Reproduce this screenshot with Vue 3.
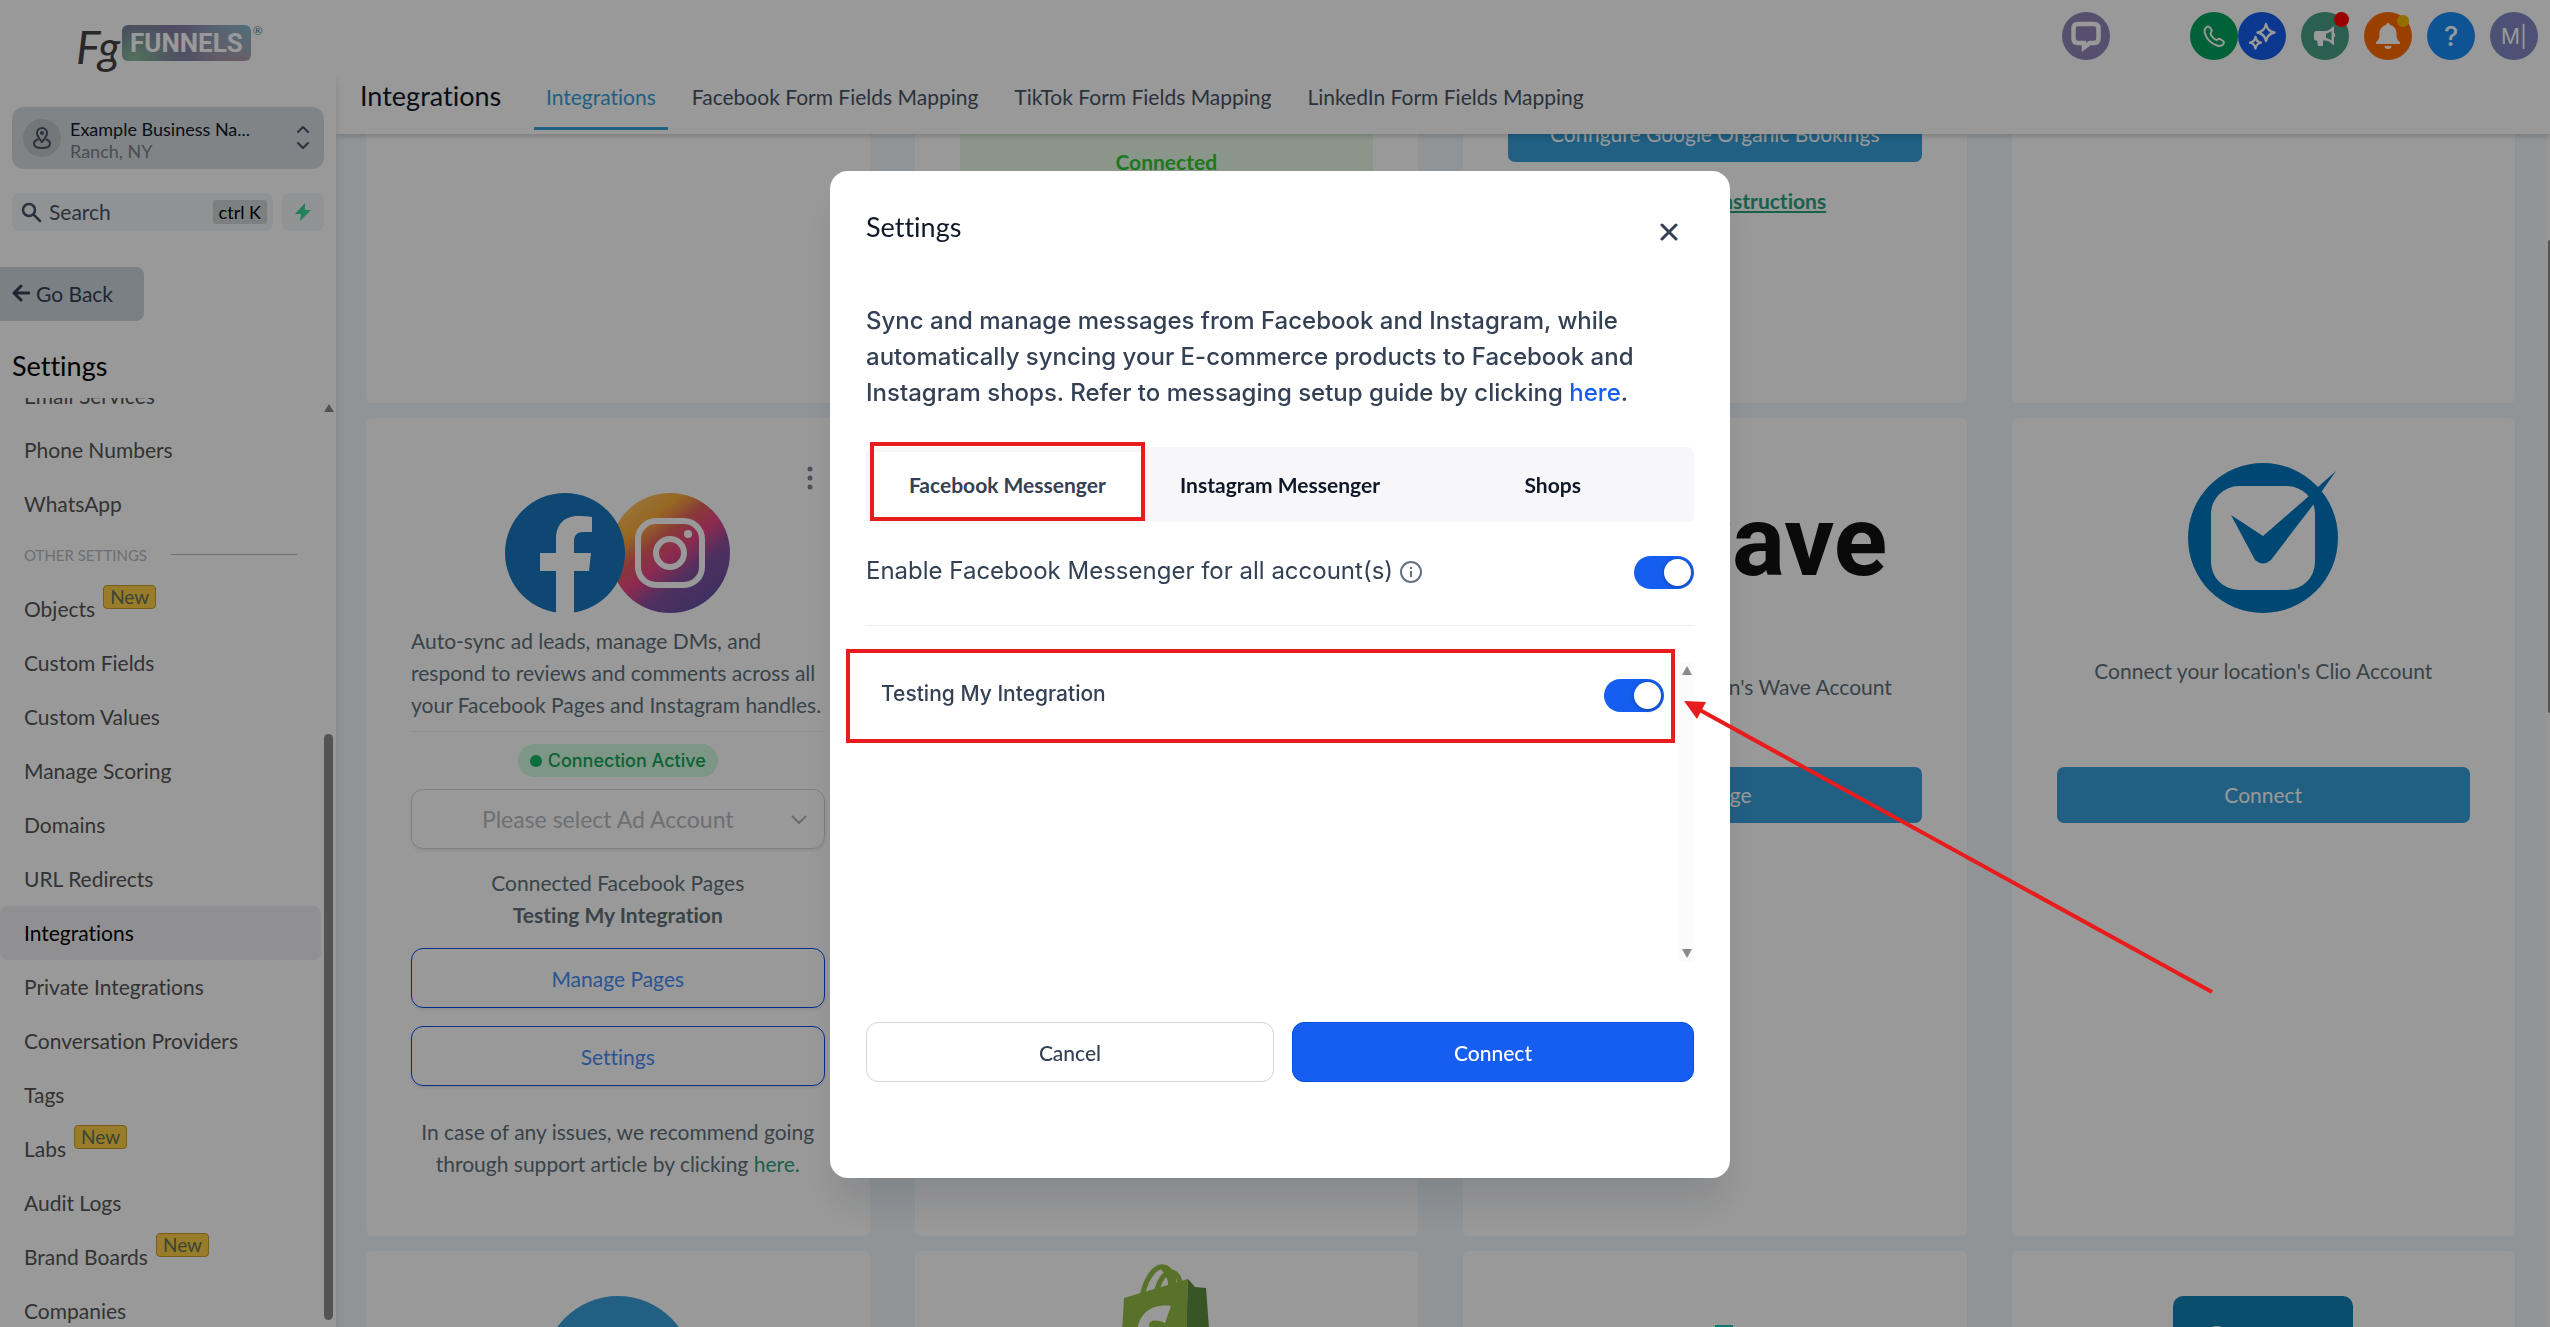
<script setup>
import { ref } from 'vue';

const navTop = ['Email Services', 'Phone Numbers', 'WhatsApp'].map((label) => ({ label }));

const navOther = [
  { label: 'Objects', isNew: true },
  { label: 'Custom Fields' },
  { label: 'Custom Values' },
  { label: 'Manage Scoring' },
  { label: 'Domains' },
  { label: 'URL Redirects' },
  { label: 'Integrations', active: true },
  { label: 'Private Integrations' },
  { label: 'Conversation Providers' },
  { label: 'Tags' },
  { label: 'Labs', isNew: true },
  { label: 'Audit Logs' },
  { label: 'Brand Boards', isNew: true },
  { label: 'Companies' },
];

const pageTabs = [
  'Integrations',
  'Facebook Form Fields Mapping',
  'TikTok Form Fields Mapping',
  'LinkedIn Form Fields Mapping',
];
const pageTab = ref('Integrations');

const modalTabs = ['Facebook Messenger', 'Instagram Messenger', 'Shops'];
const modalTab = ref('Facebook Messenger');

const adAccount = ref('');
const enableAll = ref(true);
const pages = ref([{ id: 'page-1', name: 'Testing My Integration', enabled: true }]);
</script>

<template>
  <div class="page">
    <aside class="sidebar">
      <div class="logo">
        <span class="logo-fg">Fg</span>
        <span class="logo-box">FUNNELS</span>
        <span class="logo-reg">®</span>
      </div>

      <button class="switcher" type="button">
        <span class="pin">
          <svg width="24" height="24" viewBox="0 0 24 24" fill="none" stroke="#475467" stroke-width="2" stroke-linecap="round" stroke-linejoin="round">
            <path d="M12 16c3-3.500 5-6 5-9a5 5 0 0 0-10 0c0 3 2 5.500 5 9z" />
            <circle cx="12" cy="7" r="1" />
            <path d="M7.500 13.500C5.500 14.300 4 15.700 4 17.500 4 20.500 7.500 22 12 22s8-1.500 8-4.500c0-1.800-1.500-3.200-3.500-4" />
          </svg>
        </span>
        <span class="place">
          <span class="place-name">Example Business Na...</span>
          <span class="place-city">Ranch, NY</span>
        </span>
        <svg width="14" height="26" viewBox="0 0 14 26" fill="none" stroke="#475467" stroke-width="2" stroke-linecap="round" stroke-linejoin="round">
          <path d="M2 7l5-5 5 5M2 18l5 5 5-5" />
        </svg>
      </button>

      <div class="search-row">
        <button class="search" type="button">
          <svg width="22" height="22" viewBox="0 0 22 22" fill="none" stroke="#475467" stroke-width="2.500" stroke-linecap="round">
            <circle cx="9" cy="9" r="6" />
            <path d="M13.500 13.500L20 20" />
          </svg>
          <span class="search-text">Search</span>
          <kbd>ctrl K</kbd>
        </button>
        <button class="bolt" type="button" aria-label="Quick actions">
          <svg width="18" height="20" viewBox="0 0 18 20" fill="#38d996"><path d="M11 1L1 12h6l-1 7L17 8h-6z" /></svg>
        </button>
      </div>

      <button class="go-back" type="button">
        <svg width="18" height="18" viewBox="0 0 18 18" fill="none" stroke="#344054" stroke-width="3" stroke-linecap="round" stroke-linejoin="round">
          <path d="M9 2L2 9l7 7M2 9h15" />
        </svg>
        Go Back
      </button>

      <h2 class="side-title">Settings</h2>

      <div class="nav-area">
        <nav class="nav">
          <a v-for="item in navTop" :key="item.label" href="#" class="nav-item">{{ item.label }}</a>
          <div class="nav-group"><span>OTHER SETTINGS</span></div>
          <a v-for="item in navOther" :key="item.label" href="#" class="nav-item" :class="{ active: item.active }">
            {{ item.label }}
            <span v-if="item.isNew" class="new-badge">New</span>
          </a>
        </nav>
        <div class="nav-scroll">
          <svg width="10" height="8" viewBox="0 0 10 8" fill="#888"><path d="M5 0l5 8H0z" /></svg>
          <div class="nav-thumb"></div>
        </div>
      </div>
    </aside>

    <div class="main">
      <header class="header">
        <div class="actions">
          <button class="round chat" type="button" aria-label="Chat">
            <svg width="32" height="32" viewBox="0 0 32 32">
              <path d="M8 4h16q4.500 0 4.500 4.500v10q0 4.500-4.500 4.500h-4l-6 4.500V23H8q-4.500 0-4.500-4.500v-10Q3.500 4 8 4z" fill="none" stroke="#fff" stroke-width="4.500" />
            </svg>
          </button>
          <div class="pair">
            <button class="round phone" type="button" aria-label="Call">
              <svg width="24" height="24" viewBox="0 0 24 24" fill="none" stroke="#fff" stroke-width="2" stroke-linejoin="round">
                <path d="M4 3.500c1-1.500 3-1.500 4 0l1.500 2.500c.8 1.500-.8 2.500-1 3.500 0 1.800 4 6.200 6 6.500 1.200 0 2-1.800 3.500-1l3 2c1.300 1 1 2.500 0 3.500-1.500 1.500-3.500 2-6 1C9 19.500 4.500 14.500 2.800 9 2 6.500 2.800 5 4 3.500z" />
              </svg>
            </button>
            <button class="round spark" type="button" aria-label="Assistant">
              <svg width="28" height="28" viewBox="0 0 28 28" fill="none" stroke="#fff" stroke-width="2.300" stroke-linejoin="round">
                <path d="M18 2c1 5 3 7.500 8.500 8.500C21 11.500 19 14 18 19c-1-5-3-7.500-8.500-8.500C15 9.500 17 7 18 2zM7.500 15c.6 3.500 2 5 5.500 5.700-3.500.7-4.900 2.300-5.500 5.800-.6-3.500-2-5.100-5.500-5.800 3.500-.7 4.900-2.200 5.500-5.700z" />
              </svg>
            </button>
          </div>
          <button class="round horn" type="button" aria-label="Announcements">
            <svg width="24" height="24" viewBox="0 0 24 24" fill="#fff">
              <path fill-rule="evenodd" d="M3 7h9c3 0 6-2 8-4.500h1v6.500c1.500.5 1.500 4 0 4.500V21h-1c-2-2.500-5-4.500-8-4.500h-2V22H5l-1-5.500H3c-1 0-2-1-2-2V9c0-1 1-2 2-2zm10 2.500v4.500c2 .3 4 1.300 5.500 2.500V7c-1.500 1.200-3.500 2.200-5.500 2.500z" />
            </svg>
            <span class="dot red"></span>
          </button>
          <button class="round bell" type="button" aria-label="Notifications">
            <svg width="26" height="28" viewBox="0 0 26 28" fill="#fff">
              <path d="M13 1a2 2 0 0 1 2 2c4 1 6.500 4 6.500 8.500 0 5 1 7 3.500 8.500v2H1v-2c2.500-1.500 3.500-3.500 3.500-8.500C4.500 7 7 4 11 3a2 2 0 0 1 2-2zM9.500 24h7a3.500 3 0 0 1-7 0z" />
            </svg>
            <span class="dot yellow"></span>
          </button>
          <button class="round help" type="button">?</button>
          <button class="round user" type="button">M|</button>
        </div>
        <div class="title-row">
          <h1>Integrations</h1>
          <nav class="page-tabs">
            <a v-for="tab in pageTabs" :key="tab" href="#" :class="{ active: tab === pageTab }" @click.prevent="pageTab = tab">{{ tab }}</a>
          </nav>
        </div>
      </header>

      <div class="content">
        <div class="grid">
          <section class="card row-one"></section>
          <section class="card row-one">
            <div class="connected">Connected</div>
          </section>
          <section class="card row-one">
            <button class="primary" type="button">Configure Google Organic Bookings</button>
            <a href="#" class="instructions">View Setup Instructions</a>
          </section>
          <section class="card row-one"></section>

          <section class="card row-two social">
            <button class="kebab" type="button" aria-label="More">
              <svg width="6" height="24" viewBox="0 0 6 24" fill="#7c8698"><circle cx="3" cy="3" r="2.500" /><circle cx="3" cy="12" r="2.500" /><circle cx="3" cy="21" r="2.500" /></svg>
            </button>
            <svg class="social-logo" width="225" height="120" viewBox="0 0 225 120">
              <defs>
                <linearGradient id="ig" x1="0.150" y1="0.050" x2="0.850" y2="0.950">
                  <stop offset="0.050" stop-color="#fdbf5c" />
                  <stop offset="0.220" stop-color="#fbad3a" />
                  <stop offset="0.380" stop-color="#e36060" />
                  <stop offset="0.520" stop-color="#ec4686" />
                  <stop offset="0.700" stop-color="#85509e" />
                  <stop offset="1" stop-color="#6052a4" />
                </linearGradient>
              </defs>
              <circle cx="165" cy="60" r="60" fill="url(#ig)" />
              <rect x="133" y="28" width="64" height="64" rx="18" fill="none" stroke="#fff" stroke-width="6" />
              <circle cx="165" cy="60" r="14" fill="none" stroke="#fff" stroke-width="6" />
              <circle cx="183" cy="41" r="4" fill="#fff" />
              <circle cx="60" cy="60" r="60" fill="#1877bd" />
              <path d="M51 121V78H35V60h16V46c0-14 8-23 22-23 5 0 9 0 14 1v15h-8c-7 0-10 3-10 10v11h17l-2 18H69v43z" fill="#fff" />
            </svg>
            <p class="desc">Auto-sync ad leads, manage DMs, and respond to reviews and comments across all your Facebook Pages and Instagram handles.</p>
            <span class="status"><i></i>Connection Active</span>
            <div class="select-wrap">
              <select v-model="adAccount" aria-label="Ad account">
                <option value="">Please select Ad Account</option>
              </select>
              <svg width="16" height="10" viewBox="0 0 16 10" fill="none" stroke="#b0b4bb" stroke-width="2"><path d="M1 1l7 7 7-7" /></svg>
            </div>
            <p class="pages">Connected Facebook Pages<br /><b>Testing My Integration</b></p>
            <div class="outline-list">
              <button class="outline" type="button">Manage Pages</button>
              <button class="outline" type="button">Settings</button>
            </div>
            <p class="issues">In case of any issues, we recommend going through support article by clicking <a href="#">here.</a></p>
          </section>

          <section class="card row-two"></section>

          <section class="card row-two wave">
            <div class="wave-logo">wave</div>
            <p class="card-text">Connect your location's Wave Account</p>
            <button class="primary" type="button">Manage</button>
          </section>

          <section class="card row-two clio">
            <svg class="clio-logo" width="150" height="150" viewBox="0 0 150 150">
              <circle cx="75" cy="75" r="75" fill="#0078c0" />
              <rect x="23" y="23" width="104" height="104" rx="28" fill="#fff" />
              <path d="M43 52l32 21 46-40 9-9 18-16-14 20-9 14-42 55q-8 7-16 0z" fill="#0078c0" />
            </svg>
            <p class="card-text">Connect your location's Clio Account</p>
            <button class="primary" type="button">Connect</button>
          </section>

          <section class="card row-three">
            <svg width="150" height="150" viewBox="0 0 150 150"><circle cx="75" cy="75" r="75" fill="#379fda" /></svg>
          </section>
          <section class="card row-three shop">
            <svg width="92" height="105" viewBox="0 0 92 105">
              <path d="M21 40C24 16 35 2 44 4c7 1 10 9 11 23M35 35C38 18 45 8 52 9c5 1 8 7 9 15M43 5c8 8 8 16 8 26" fill="none" stroke="#95bf47" stroke-width="5" />
              <path d="M4 35l64-19-3 89H0z" fill="#95bf47" />
              <path d="M68 16l7 8 11 1 6 80H65z" fill="#5e8e3e" />
              <path d="M51 43l-6 17c-8-4-16-3-16 2 0 6 16 8 16 23H20c-8-20 1-46 31-42z" fill="#fff" />
            </svg>
          </section>
          <section class="card row-three teal">
            <svg width="18" height="40" viewBox="0 0 18 40"><rect width="18" height="40" fill="#20c5c0" /></svg>
          </section>
          <section class="card row-three">
            <svg width="180" height="150" viewBox="0 0 180 150">
              <rect width="180" height="150" rx="10" fill="#1282b7" />
              <circle cx="44" cy="43" r="13" fill="#fff" />
            </svg>
          </section>
        </div>
        <div class="page-scroll"><div class="page-thumb"></div></div>
      </div>
    </div>

    <div class="overlay">
      <div class="modal" role="dialog" aria-labelledby="modal-title">
        <div class="modal-head">
          <h3 id="modal-title">Settings</h3>
          <button class="close" type="button" aria-label="Close">
            <svg width="18" height="18" viewBox="0 0 18 18" fill="none" stroke="#344054" stroke-width="3" stroke-linecap="round"><path d="M2 2l14 14M16 2L2 16" /></svg>
          </button>
        </div>

        <p class="intro">
          Sync and manage messages from Facebook and Instagram, while automatically syncing your E-commerce products to Facebook and Instagram shops. Refer to messaging setup guide by clicking <a href="#">here</a>.
        </p>

        <div class="tabs" role="tablist">
          <button
            v-for="tab in modalTabs"
            :key="tab"
            type="button"
            role="tab"
            :class="{ active: tab === modalTab }"
            @click="modalTab = tab"
          >{{ tab }}</button>
        </div>

        <div class="enable">
          <label for="enable-all">Enable Facebook Messenger for all account(s)</label>
          <svg width="22" height="22" viewBox="0 0 22 22" fill="none" stroke="#667085" stroke-width="2">
            <circle cx="11" cy="11" r="10" />
            <path d="M11 10v6M11 6v2" />
          </svg>
          <input id="enable-all" v-model="enableAll" class="toggle" type="checkbox" />
        </div>

        <div class="accounts">
          <div class="account-list">
            <div v-for="page in pages" :key="page.id" class="account">
              <label :for="page.id">{{ page.name }}</label>
              <input :id="page.id" v-model="page.enabled" class="toggle" type="checkbox" />
            </div>
          </div>
          <div class="list-scroll">
            <svg width="10" height="9" viewBox="0 0 10 9" fill="#8a8a8a"><path d="M5 0l5 9H0z" /></svg>
            <svg width="10" height="9" viewBox="0 0 10 9" fill="#8a8a8a"><path d="M5 9l5-9H0z" /></svg>
          </div>
        </div>

        <div class="modal-foot">
          <button class="cancel" type="button">Cancel</button>
          <button class="connect" type="button">Connect</button>
        </div>

        <svg class="arrow" width="530" height="294" viewBox="0 0 530 294">
          <path d="M14 8L528 291" stroke="#e81c1c" stroke-width="4" />
          <path d="M0 0l22 1-9 17z" fill="#e81c1c" />
        </svg>
      </div>
    </div>
  </div>
</template>

<style>
body {
  margin: 0;
  overflow: hidden;
}
</style>

<style scoped>
.page {
  display: flex;
  height: 100vh;
  overflow: hidden;
  background: #fff;
  font-family: Lato, 'Liberation Sans', sans-serif;
  font-size: 21px;
  font-variant-ligatures: none;
  color: #607179;
}

.page * {
  box-sizing: border-box;
}

button,
select {
  font: inherit;
  font-variant-ligatures: none;
  color: inherit;
  border: 0;
  padding: 0;
  background: none;
  cursor: pointer;
}

a {
  text-decoration: none;
  color: inherit;
}

h1,
h2,
h3,
p {
  margin: 0;
  font-weight: 400;
}

svg {
  display: block;
  flex-shrink: 0;
}

/* sidebar */
.sidebar {
  width: 336px;
  flex-shrink: 0;
  display: flex;
  flex-direction: column;
  position: relative;
  z-index: 2;
  background: #fff;
  box-shadow: 0 80px 8px rgba(0, 0, 0, 0.12);
}

.logo {
  display: flex;
  align-items: flex-start;
  height: 107px;
  padding: 25px 0 0 76px;
}

.logo-fg {
  width: 46px;
  font-size: 46px;
  line-height: 44px;
  font-style: italic;
  color: #444;
}

.logo-box {
  height: 36px;
  line-height: 36px;
  padding: 0 8px;
  border-radius: 6px;
  font-family: Roboto, sans-serif;
  font-size: 26px;
  font-weight: 700;
  color: #fff;
  background:
    radial-gradient(circle at 10% 100%, #86c09b, transparent 40%),
    radial-gradient(circle at 100% 0, #86b9cc, transparent 50%),
    radial-gradient(circle at 95% 100%, #d2818f, transparent 40%),
    linear-gradient(90deg, #78699c, #98a0b4);
}

.logo-reg {
  font-size: 12px;
  line-height: 12px;
  margin-left: 2px;
  color: #4e7f94;
}

.switcher {
  display: flex;
  align-items: center;
  height: 62px;
  flex-shrink: 0;
  margin: 0 12px;
  padding: 0 14px 0 11px;
  border-radius: 12px;
  background: #d8dcdf;
  text-align: left;
}

.pin {
  display: flex;
  align-items: center;
  justify-content: center;
  width: 38px;
  height: 38px;
  border-radius: 50%;
  background: #c3c5c8;
}

.place {
  flex: 1;
  display: flex;
  flex-direction: column;
  margin-left: 9px;
  padding-top: 4px;
  line-height: 22px;
}

.place-name {
  font-size: 18px;
  color: #101828;
}

.place-city {
  font-size: 18px;
  color: #7a7f88;
}

.search-row {
  display: flex;
  gap: 9px;
  flex-shrink: 0;
  margin: 24px 12px 0;
}

.search {
  flex: 1;
  display: flex;
  align-items: center;
  height: 38px;
  padding: 0 6px 0 8px;
  border-radius: 8px;
  background: #f2f4f7;
  color: #475467;
}

.search-text {
  flex: 1;
  margin-left: 7px;
  padding-bottom: 2px;
  text-align: left;
}

kbd {
  padding: 0 6px;
  border-radius: 3px;
  background: #d0d5d8;
  font-family: inherit;
  font-size: 18px;
  line-height: 24px;
  color: #000;
}

.bolt {
  display: flex;
  align-items: center;
  justify-content: center;
  width: 42px;
  height: 38px;
  border-radius: 8px;
  background: #f2f4f7;
}

.go-back {
  display: flex;
  align-items: center;
  gap: 6px;
  width: 144px;
  height: 54px;
  flex-shrink: 0;
  margin-top: 36px;
  padding: 0 0 2px 12px;
  border-radius: 0 8px 8px 0;
  background: #cbd5db;
  color: #344054;
}

.side-title {
  margin-top: 25px;
  padding-left: 12px;
  font-size: 27px;
  line-height: 40px;
  height: 52px;
  flex-shrink: 0;
  color: #000;
}

.nav-area {
  flex: 1;
  min-height: 0;
  display: flex;
  overflow: hidden;
}

.nav {
  flex: 1;
  margin-top: -29px;
}

.nav-item {
  display: flex;
  align-items: center;
  height: 54px;
  margin-right: 2px;
  padding: 0 0 2px 24px;
  border-radius: 8px;
  color: #555;
}

.nav-item.active {
  background: #f0f0f3;
  color: #000;
}

.nav-group {
  display: flex;
  align-items: center;
  gap: 24px;
  height: 51px;
  padding: 0 26px 4px 24px;
  font-size: 15px;
  color: #b4b9c2;
}

.nav-group::after {
  content: '';
  flex: 1;
  height: 1px;
  background: #b4b9c2;
}

.new-badge {
  align-self: flex-start;
  margin: 3px 0 0 8px;
  padding: 0 6px;
  border: 1px solid #c89b30;
  border-radius: 4px;
  background: #fecf46;
  font-size: 19px;
  line-height: 22px;
  color: #65735c;
}

.nav-scroll {
  width: 13px;
  display: flex;
  flex-direction: column;
  padding: 6px 3px 7px 1px;
}

.nav-thumb {
  width: 9px;
  margin-top: auto;
  height: 64%;
  border-radius: 5px;
  background: #8b8b8b;
}

/* header */
.main {
  flex: 1;
  min-width: 0;
  display: flex;
  flex-direction: column;
}

.header {
  height: 134px;
  flex-shrink: 0;
  position: relative;
  z-index: 1;
  background: #fff;
  box-shadow: 0 2px 6px rgba(0, 0, 0, 0.2);
}

.actions {
  display: flex;
  justify-content: flex-end;
  gap: 15px;
  height: 72px;
  padding: 12px 12px 0 0;
}

.pair {
  display: flex;
}

.round {
  display: flex;
  align-items: center;
  justify-content: center;
  position: relative;
  width: 48px;
  height: 48px;
  border-radius: 50%;
  color: #fff;
}

.chat {
  margin-right: 65px;
  background: #8f86b8;
}

.phone {
  background: #00a35a;
}

.spark {
  background: #155eef;
}

.horn {
  background: #49a085;
}

.bell {
  background: #ff6c00;
}

.help {
  background: #188bf6;
  font-family: Inter, sans-serif;
  font-size: 27px;
  font-weight: 500;
}

.user {
  background: #8087c3;
  font-family: Inter, sans-serif;
  font-size: 21px;
}

.dot {
  position: absolute;
  top: 0;
  right: 0;
  width: 15px;
  height: 15px;
  border-radius: 50%;
}

.dot.red {
  background: #f00;
}

.dot.yellow {
  top: 3px;
  right: 3px;
  width: 12px;
  height: 12px;
  background: #f5b800;
}

.title-row {
  display: flex;
  padding-left: 24px;
}

h1 {
  width: 174px;
  font-size: 27px;
  line-height: 48px;
  color: #101828;
}

.page-tabs {
  display: flex;
  gap: 12px;
}

.page-tabs a {
  height: 58px;
  padding: 0 12px;
  line-height: 50px;
  border-bottom: 3px solid transparent;
  color: #475467;
}

.page-tabs a.active {
  border-color: #37a0d8;
  color: #37a0d8;
}

/* cards */
.content {
  flex: 1;
  min-height: 0;
  display: flex;
  overflow: hidden;
  background: #f0f7fc;
}

.grid {
  flex: 1;
  display: grid;
  grid-template-columns: repeat(4, 1fr);
  gap: 15px 45px;
  align-content: start;
  margin-top: -88px;
  padding: 0 30px;
}

.page-scroll {
  width: 5px;
  padding-top: 106px;
  background: #fafafa;
}

.page-thumb {
  height: 473px;
  margin-left: 3px;
  border-radius: 4px 0 0 4px;
  background: #8b8b8b;
}

.card {
  display: flex;
  flex-direction: column;
  align-items: center;
  padding: 45px;
  border-radius: 6px;
  background: #fff;
}

.row-one {
  min-height: 357px;
  padding-top: 60px;
}

.row-two {
  min-height: 818px;
}

.row-three {
  min-height: 400px;
}

.primary {
  width: 100%;
  height: 56px;
  flex-shrink: 0;
  padding-bottom: 2px;
  border-radius: 7px;
  background: #379fda;
  color: #fff;
}

.connected {
  width: 100%;
  padding: 40px 0 20px;
  background: #e8fbe8;
  line-height: 32px;
  font-weight: 700;
  text-align: center;
  color: #32c832;
}

.instructions {
  margin-top: 23px;
  line-height: 32px;
  font-weight: 700;
  text-decoration: underline;
  color: #2aa27e;
}

.card-text {
  line-height: 32px;
  text-align: center;
}

.social {
  position: relative;
  padding-top: 75px;
}

.kebab {
  position: absolute;
  top: 48px;
  right: 57px;
}

.desc {
  width: 100%;
  margin-top: 12px;
  padding-bottom: 10px;
  border-bottom: 1px solid #f0f1f3;
  line-height: 32px;
}

.status {
  display: flex;
  align-items: center;
  gap: 6px;
  margin-top: 12px;
  padding: 0 12px;
  border-radius: 17px;
  background: #d1fadf;
  font-family: Inter, sans-serif;
  font-size: 18px;
  font-weight: 500;
  line-height: 33px;
  color: #12a35c;
}

.status i {
  width: 12px;
  height: 12px;
  border-radius: 50%;
  background: #12b76a;
}

.select-wrap {
  position: relative;
  width: 100%;
  margin-top: 12px;
}

.select-wrap select {
  display: block;
  width: 100%;
  height: 60px;
  padding-right: 20px;
  appearance: none;
  border: 1px solid #d0d5dd;
  border-radius: 12px;
  box-shadow: 0 2px 3px rgba(16, 24, 40, 0.08);
  font-size: 23px;
  text-align: center;
  text-align-last: center;
  color: #b6bac0;
}

.select-wrap svg {
  position: absolute;
  right: 18px;
  top: 26px;
  pointer-events: none;
}

.pages {
  margin-top: 18px;
  line-height: 32px;
  text-align: center;
}

.outline-list {
  width: 100%;
  display: flex;
  flex-direction: column;
  gap: 18px;
  margin-top: 17px;
}

.outline {
  height: 60px;
  border: 1px solid #004eeb;
  border-radius: 12px;
  box-shadow: 0 2px 3px rgba(16, 24, 40, 0.08);
  color: #488cf5;
}

.issues {
  margin-top: 30px;
  line-height: 32px;
  text-align: center;
}

.issues a {
  color: #2aa27e;
}

.wave-logo {
  height: 208px;
  width: 345px;
  padding-top: 18px;
  font-family: Roboto, sans-serif;
  font-size: 99px;
  font-weight: 700;
  line-height: 120px;
  text-align: right;
  color: #111;
}

.wave .primary {
  margin-top: 64px;
}

.clio-logo {
  margin-bottom: 42px;
}

.clio .primary {
  margin-top: 80px;
}

.shop {
  padding-top: 12px;
}

.teal {
  padding-top: 74px;
  padding-left: 63px;
}

/* modal */
.overlay {
  position: fixed;
  inset: 0;
  z-index: 10;
  display: flex;
  justify-content: center;
  align-items: flex-start;
  padding: 171px 0 0 10px;
  background: rgba(0, 0, 0, 0.4);
}

.modal {
  position: relative;
  width: 900px;
  padding: 36px 36px 96px;
  border-radius: 18px;
  background: #fff;
  box-shadow: 0 30px 36px -6px rgba(16, 24, 40, 0.12);
  color: #344054;
}

.modal-head {
  display: flex;
  justify-content: space-between;
  height: 44px;
}

h3 {
  font-size: 27px;
  line-height: 40px;
  color: #101828;
}

.close {
  height: 50px;
  padding: 0 16px;
}

.intro {
  margin-top: 52px;
  font-family: Inter, sans-serif;
  font-size: 24px;
  font-weight: 500;
  line-height: 36px;
}

.intro a {
  color: #155eef;
}

.tabs {
  display: flex;
  height: 75px;
  margin-top: 36px;
  padding: 5px;
  border-radius: 6px;
  background: #f7f7fa;
}

.tabs button {
  flex: 1;
  position: relative;
  border-radius: 5px;
  font-weight: 700;
  color: #101828;
}

.tabs .active {
  background: #fff;
  color: #344054;
}

.tabs .active::after {
  content: '';
  position: absolute;
  inset: -10px -1px -4px -1px;
  border: 4px solid #e81c1c;
}

.enable {
  display: flex;
  align-items: center;
  height: 104px;
  padding-bottom: 3px;
  border-bottom: 1px solid #eaecf0;
  font-family: Inter, sans-serif;
  font-size: 24px;
}

.enable label,
.account label {
  padding-bottom: 4px;
}

.enable svg {
  margin-left: 7px;
}

.toggle {
  appearance: none;
  display: flex;
  width: 60px;
  height: 33px;
  margin: 0 0 0 auto;
  padding: 3px;
  border-radius: 17px;
  background: #155eef;
  cursor: pointer;
}

.toggle::before {
  content: '';
  width: 27px;
  height: 27px;
  border-radius: 50%;
  background: #fff;
  box-shadow: 0 1px 4px rgba(0, 0, 0, 0.3);
}

.toggle:checked::before {
  margin-left: auto;
}

.accounts {
  display: flex;
  height: 300px;
  margin-top: 36px;
}

.account-list {
  flex: 1;
}

.account {
  display: flex;
  align-items: center;
  position: relative;
  height: 67px;
  padding: 0 15px;
  font-family: Inter, sans-serif;
  font-weight: 500;
}

.account::after {
  content: '';
  position: absolute;
  inset: -13px 4px -14px -20px;
  border: 4px solid #e81c1c;
  pointer-events: none;
}

.list-scroll {
  width: 15px;
  display: flex;
  flex-direction: column;
  justify-content: space-between;
  align-items: center;
  padding: 4px 0;
  background: #fbfbfb;
}

.modal-foot {
  display: grid;
  grid-template-columns: 68fr 67fr;
  gap: 18px;
  margin-top: 60px;
}

.modal-foot button {
  height: 60px;
  border: 1px solid #d0d5dd;
  border-radius: 12px;
  font-weight: 500;
}

.modal-foot .connect {
  border-color: #004eeb;
  background: #155eef;
  color: #fff;
}

.arrow {
  position: absolute;
  left: 854px;
  top: 530px;
  pointer-events: none;
}
</style>
